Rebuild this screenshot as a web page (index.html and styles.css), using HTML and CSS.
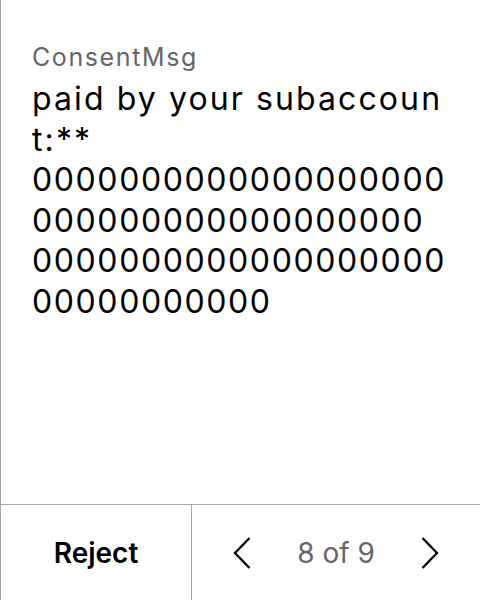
FILE: index.html
```html
<!DOCTYPE html>
<html>
<head>
<meta charset="utf-8">
<link rel="stylesheet" href="styles.css">
</head>
<body>
<div class="screen">
  <main class="content">
    <div class="title">ConsentMsg</div>
    <div class="message"><span class="words">paid by your subaccount:**</span>
0000000000000000000
000000000000000000
000000000000000000000000000000</div>
  </main>
  <footer class="footer">
    <button class="reject">Reject</button>
    <div class="pager">
      <svg class="chev" width="18" height="32" viewBox="0 0 18 32"><path d="M16.5 1 L2 16 L16.5 31" fill="none" stroke="#000" stroke-width="2.3"/></svg>
      <span class="count">8 of 9</span>
      <svg class="chev" width="18" height="32" viewBox="0 0 18 32"><path d="M1.5 1 L16 16 L1.5 31" fill="none" stroke="#000" stroke-width="2.3"/></svg>
    </div>
  </footer>
</div>
</body>
</html>
```
FILE: styles.css
```css
html, body {
  margin: 0;
  padding: 0;
  background: #fff;
}
body {
  font-family: Inter, "Noto Sans", sans-serif;
}
.screen {
  width: 480px;
  height: 600px;
  box-sizing: border-box;
  border-left: 1px solid #a8a8a8;
  display: flex;
  flex-direction: column;
}
.content {
  flex: 1;
  padding: 42px 32px 0 31px;
}
.title {
  font-size: 25px;
  line-height: 30px;
  letter-spacing: 1.6px;
  color: #666;
}
.message {
  margin-top: 7px;
  font-size: 32px;
  line-height: 40.6px;
  letter-spacing: 1.6px;
  color: #000;
  white-space: pre-line;
  word-break: break-all;
}
.words {
  letter-spacing: 2.1px;
}
.footer {
  height: 96px;
  box-sizing: border-box;
  border-top: 1px solid #a8a8a8;
  display: flex;
}
.reject {
  width: 191px;
  border: 0;
  border-right: 1px solid #a8a8a8;
  background: #fff;
  font-family: Inter, "Noto Sans", sans-serif;
  font-size: 28px;
  font-weight: 600;
  color: #000;
  padding: 0;
}
.pager {
  flex: 1;
  display: flex;
  align-items: center;
  justify-content: space-between;
  padding: 0 41px 0 41px;
}
.count {
  font-size: 28px;
  color: #666;
}
.chev {
  display: block;
}
```
